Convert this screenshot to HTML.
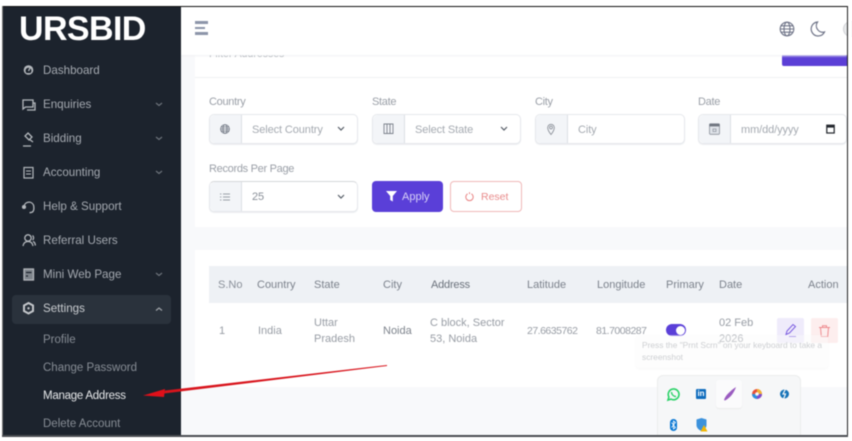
<!DOCTYPE html>
<html><head><meta charset="utf-8"><style>
*{box-sizing:border-box}
html,body{margin:0;padding:0;width:852px;height:441px;overflow:hidden;background:#fff}
body{font-family:"Liberation Sans",sans-serif;position:relative}
#w{position:absolute;inset:0;filter:blur(.4px)}
.a{position:absolute;white-space:nowrap}
.m{color:#a4a9b0;font-size:11.6px;line-height:14px;left:43px}
.s{color:#878d95;font-size:11.5px;line-height:14px;left:43px}
.l{color:#9a9fa7;font-size:11px;line-height:13px;letter-spacing:-.3px}
.g{position:absolute;height:30px;border:1px solid #e6e8ec;border-radius:5px;background:#fff;box-shadow:0 1px 1px #eceef1}
.g i{position:absolute;left:0;top:0;bottom:0;width:32px;background:#f3f5f8;border-right:1px solid #dde0e5;border-radius:5px 0 0 5px}
.t{color:#a5aab1;font-size:11px;line-height:13px;letter-spacing:-.1px}
.h{color:#7c828c;font-size:11px;line-height:13px}
.c{color:#989da5;font-size:11px;line-height:16px}
svg{position:absolute;overflow:visible}
</style></head><body><div id="w">
<div class="a" style="left:181px;top:7px;width:667px;height:428px;background:#f8f9fb"></div>
<div class="a" style="left:195px;top:50px;width:652px;height:177px;background:#fff"></div>
<div class="a" style="left:195px;top:77px;width:652px;height:1px;background:#eff1f3"></div>
<div class="a" style="left:782px;top:46px;width:65px;height:20px;background:#5b3fd6;border-radius:0 0 0 2px;color:#e6e1fa;font-size:10px;line-height:14px;padding-left:19px">Add New</div>
<div class="a" style="left:209px;top:48px;color:#8d939c;font-size:10.5px;line-height:13px">Filter Addresses</div>
<div class="a" style="left:195px;top:250px;width:652px;height:137px;background:#fff"></div>

<div class="a" style="left:181px;top:7px;width:666px;height:48px;background:#fff;box-shadow:0 1px 2px #f0f1f3"></div>
<div class="a" style="left:195px;top:21px;width:13px;height:2.500px;background:#8d95a9"></div>
<div class="a" style="left:195px;top:26.500px;width:10px;height:2px;background:#8d95a9"></div>
<div class="a" style="left:195px;top:32px;width:13px;height:2.500px;background:#8d95a9"></div>
<svg style="left:779px;top:21px" width="16" height="16" viewBox="0 0 16 16" fill="none" stroke="#6f7488" stroke-width="1.100"><circle cx="8" cy="8" r="6.800"/><ellipse cx="8" cy="8" rx="3" ry="6.800"/><path d="M1.200 8h13.600M2 4.800h12M2 11.200h12"/></svg>
<svg style="left:810px;top:21px" width="16" height="16" viewBox="0 0 16 16" fill="none" stroke="#6f7488" stroke-width="1.200"><path d="M7.500 1A7 7 0 1 0 14.500 11 6.500 6.500 0 0 1 7.500 1z"/></svg>
<div class="a" style="left:843px;top:21px;width:16px;height:16px;border-radius:50%;background:#e8e9eb;border:1px solid #d2d4d7"></div>

<div class="a l" style="left:209px;top:96px">Country</div>
<div class="a l" style="left:372px;top:96px">State</div>
<div class="a l" style="left:535px;top:96px">City</div>
<div class="a l" style="left:698px;top:96px">Date</div>
<div class="g" style="left:209px;top:114px;width:149px"><i></i></div>
<div class="g" style="left:372px;top:114px;width:149px"><i></i></div>
<div class="g" style="left:535px;top:114px;width:150px"><i></i></div>
<div class="g" style="left:698px;top:114px;width:149px"><i></i></div>
<div class="a t" style="left:252px;top:124px">Select Country</div>
<div class="a t" style="left:415px;top:124px">Select State</div>
<div class="a t" style="left:578px;top:124px">City</div>
<div class="a t" style="left:741px;top:124px">mm/dd/yyyy</div>
<svg style="left:337px;top:126px" width="8" height="6" fill="none" stroke="#555c66" stroke-width="1.200"><path d="M1 1l3 3 3-3"/></svg>
<svg style="left:500px;top:126px" width="8" height="6" fill="none" stroke="#555c66" stroke-width="1.200"><path d="M1 1l3 3 3-3"/></svg>
<svg style="left:220px;top:124px" width="10" height="10" viewBox="0 0 10 10" fill="none" stroke="#6d7480" stroke-width=".8"><circle cx="5" cy="5" r="4.400"/><ellipse cx="5" cy="5" rx="2" ry="4.400"/><path d="M.6 5h8.800M1 3h8M1 7h8"/></svg>
<svg style="left:383px;top:123px" width="11" height="12" viewBox="0 0 11 12" fill="none" stroke="#7c828c" stroke-width=".9"><path d="M1 1h9v9.500H1zM4 1v9.500M7 1v9.500"/></svg>
<svg style="left:547px;top:123px" width="8" height="12" viewBox="0 0 8 12" fill="none" stroke="#8b9099" stroke-width=".9"><path d="M4 11.500C2 9 .7 7 .7 4.600a3.300 3.300 0 0 1 6.600 0C7.300 7 6 9 4 11.500z"/><circle cx="4" cy="4.500" r="1.400"/></svg>
<svg style="left:709px;top:123px" width="11" height="12" viewBox="0 0 11 12"><rect x=".5" y=".8" width="10" height="10.500" rx="1" fill="#dfe3e9" stroke="#8b919b" stroke-width=".8"/><rect x=".5" y=".8" width="10" height="2.600" fill="#6f7680"/><rect x="4" y="6" width="3" height="2.500" fill="none" stroke="#8b919b" stroke-width=".7"/></svg>
<svg style="left:826px;top:124px" width="9" height="10" viewBox="0 0 9 10" fill="none" stroke="#20242a" stroke-width="1.200"><rect x=".8" y="1.200" width="7.400" height="7.800"/><path d="M.8 2.600h7.400" stroke-width="2"/></svg>

<div class="a l" style="left:209px;top:163px">Records Per Page</div>
<div class="g" style="left:209px;top:181px;width:149px;height:31px;border-top-color:#d5d7da"><i></i></div>
<svg style="left:220px;top:193px" width="10" height="8" fill="none" stroke="#9aa0a8" stroke-width=".9"><path d="M3 1h7M3 4h7M3 7h7M0 1h1.400M0 4h1.400M0 7h1.400"/></svg>
<svg style="left:337px;top:194px" width="8" height="6" fill="none" stroke="#555c66" stroke-width="1.200"><path d="M1 1l3 3 3-3"/></svg>
<div class="a t" style="left:252px;top:191px;color:#8a9099">25</div>
<div class="a" style="left:372px;top:181px;width:71px;height:31px;background:#5a3fd8;border-radius:4px"></div>
<svg style="left:386px;top:191px" width="11" height="11" viewBox="0 0 11 11"><path d="M0 0h11L6.800 5v5.500L4.200 9V5z" fill="#fff"/></svg>
<div class="a" style="left:402px;top:191px;color:#d9d2f7;font-size:11px;line-height:13px">Apply</div>
<div class="a" style="left:450px;top:181px;width:72px;height:31px;border:1px solid #f0b8b8;border-radius:4px;background:#fff"></div>
<svg style="left:465px;top:192px" width="9" height="10" viewBox="0 0 9 10" fill="none" stroke="#e98080" stroke-width="1"><path d="M2.600 1.800a3.700 3.700 0 1 0 3.800 0M4.500.2v1.800"/></svg>
<div class="a" style="left:481px;top:191px;color:#e88a8a;font-size:10.500px;line-height:13px">Reset</div>

<div class="a" style="left:209px;top:266px;width:638px;height:37px;background:#eef1f5"></div>
<div class="a h" style="left:218px;top:279px;color:#8a9099">S.No</div>
<div class="a h" style="left:257px;top:279px">Country</div>
<div class="a h" style="left:314px;top:279px">State</div>
<div class="a h" style="left:383px;top:279px">City</div>
<div class="a h" style="left:431px;top:279px;color:#6b727c;letter-spacing:-.2px">Address</div>
<div class="a h" style="left:527px;top:279px">Latitude</div>
<div class="a h" style="left:597px;top:279px">Longitude</div>
<div class="a h" style="left:666px;top:279px">Primary</div>
<div class="a h" style="left:719px;top:279px">Date</div>
<div class="a h" style="left:808px;top:279px">Action</div>
<div class="a c" style="left:219px;top:323px">1</div>
<div class="a c" style="left:258px;top:323px">India</div>
<div class="a c" style="left:314px;top:315px">Uttar<br>Pradesh</div>
<div class="a c" style="left:383px;top:323px;color:#7d838c">Noida</div>
<div class="a c" style="left:430px;top:315px">C block, Sector<br>53, Noida</div>
<div class="a c" style="left:527px;top:323px;font-size:10.500px;letter-spacing:-.5px">27.6635762</div>
<div class="a c" style="left:596px;top:323px;font-size:10.500px;letter-spacing:-.5px">81.7008287</div>
<div class="a" style="left:666px;top:324px;width:20px;height:12px;border-radius:6px;background:#5a3fd8"></div>
<div class="a" style="left:676px;top:325.500px;width:9px;height:9px;border-radius:50%;background:#fff"></div>
<div class="a c" style="left:719px;top:315px">02 Feb<br>2026</div>
<div class="a" style="left:777px;top:318px;width:27px;height:25px;background:#efebfb;border-radius:2px"></div>
<svg style="left:785px;top:323px" width="12" height="15" viewBox="0 0 12 15" fill="none" stroke="#7a5be0" stroke-width="1"><path d="M1 11.500L2 8 8 1.500l2.500 2L4.500 10zM4 13.500h7"/></svg>
<div class="a" style="left:811px;top:318px;width:27px;height:25px;background:#fdeeee;border-radius:2px"></div>
<svg style="left:819px;top:325px" width="11" height="12" viewBox="0 0 11 12" fill="none" stroke="#ee8b8f" stroke-width="1"><path d="M0 2.500h11M3.500 2.500V.7h4v1.800M1.500 2.500l.8 9h6.400l.8-9"/></svg>

<div class="a" style="left:636px;top:335px;width:192px;height:33px;background:rgba(250,250,251,.45);border-radius:3px;box-shadow:0 1px 3px rgba(0,0,0,.03)"></div>
<div class="a" style="left:642px;top:340px;color:#cdcfd2;font-size:8.400px;line-height:11.500px">Press the "Prnt Scrn" on your keyboard to take a<br>screenshot</div>

<div class="a" style="left:657px;top:375px;width:144px;height:60px;background:#f6f7f8;border:1px solid #eceded;border-bottom:0;border-radius:6px 6px 0 0"></div>
<div class="a" style="left:716px;top:380px;width:26px;height:28px;background:#fbfbfc;border-radius:3px;box-shadow:0 1px 1px #ebebeb"></div>
<svg style="left:667px;top:388px" width="13" height="13" viewBox="0 0 13 13" fill="none" stroke="#2bd268" stroke-width="1.600"><path d="M1 12l.9-3A5.400 5.400 0 1 1 4 11.100z"/><path d="M4.500 4c0 2.500 2 4.500 4.500 4.500" stroke-width="1.400"/></svg>
<div class="a" style="left:696px;top:389px;width:10px;height:10px;background:#0f6cbd;border-radius:1px;color:#fff;font-size:8px;font-weight:bold;line-height:10px;text-align:center">in</div>
<svg style="left:724px;top:387px" width="12" height="14" viewBox="0 0 12 14"><path d="M0 13C1 9 6 4 12 0 10 6 6 11 1 13.500z" fill="#9a5bc0"/></svg>
<svg style="left:752px;top:389px" width="10" height="10" viewBox="0 0 10 10"><circle cx="5" cy="5" r="5" fill="#e8503a"/><path d="M5 0a5 5 0 0 1 5 5H5z" fill="#f2b233"/><path d="M5 5h5a5 5 0 0 1-5 5z" fill="#7b4bd0"/><path d="M5 5v5a5 5 0 0 1-5-5z" fill="#2b8fe0"/><circle cx="5" cy="5" r="1.800" fill="#f6f7f8"/></svg>
<svg style="left:780px;top:389px" width="9" height="10" viewBox="0 0 9 10"><circle cx="4.500" cy="5" r="4.500" fill="#1673b8"/><path d="M5.500 0L3 5h2.500L3.500 10" fill="none" stroke="#f6f7f8" stroke-width="1.200"/></svg>
<svg style="left:670px;top:419px" width="7" height="12" viewBox="0 0 7 12"><rect width="7" height="12" rx="3.400" fill="#0a78d4"/><path d="M1.500 3.500l4 5L3.500 10V2l2 1.500-4 5" fill="none" stroke="#fff" stroke-width=".8"/></svg>
<svg style="left:696px;top:418px" width="12" height="14" viewBox="0 0 12 14"><path d="M.5 1.500L5.500 0l5 1.500V7c0 3-2.500 5-5 6-2.500-1-5-3-5-6z" fill="#3c92dc"/><path d="M8 7l3.500 6.500h-7z" fill="#f2b705"/></svg>

<div class="a" style="left:3px;top:7px;width:178px;height:428px;background:#1c232d"></div>
<div class="a" style="left:19px;top:9px;color:#fff;font-size:34px;font-weight:bold;line-height:40px;letter-spacing:-.6px">URSBID</div>
<div class="a" style="left:12px;top:295px;width:159px;height:29px;background:#2a323c;border-radius:4px"></div>
<div class="a m" style="top:64px">Dashboard</div>
<div class="a m" style="top:98px">Enquiries</div>
<div class="a m" style="top:132px">Bidding</div>
<div class="a m" style="top:166px">Accounting</div>
<div class="a m" style="top:200px">Help &amp; Support</div>
<div class="a m" style="top:234px">Referral Users</div>
<div class="a m" style="top:268px">Mini Web Page</div>
<div class="a m" style="top:302px;color:#c9ccd0">Settings</div>
<div class="a s" style="top:333px">Profile</div>
<div class="a s" style="top:361px">Change Password</div>
<div class="a s" style="top:389px;color:#e6e8ea;letter-spacing:-.25px">Manage Address</div>
<div class="a s" style="top:417px">Delete Account</div>
<svg style="left:0;top:0" width="182" height="330" fill="none" stroke="#b4b8bd" stroke-width="1.300">
<circle cx="28.500" cy="70" r="4.800" fill="#b4b8bd" stroke="none"/><path d="M26.500 73a3 3 0 1 1 4 0z" fill="#1c232d" stroke="none"/><path d="M28.500 71l1.500-3" stroke="#b4b8bd"/>
<path d="M23 100h10v7H25.500L23 109zM33 103h2v7h-8"/>
<path d="M28 133l4 4-3 3-4-4zM29 139l4 3M23 146h8"/>
<rect x="24" y="167.500" width="9" height="10.500" stroke-width="1.200"/><path d="M26 171h5M26 174h5" stroke-width=".9"/>
<path d="M24 207a5 5 0 0 1 9.500-2c.6 2.500.5 5-.5 6.500-1 1-2 1.200-3.500 1.200"/><circle cx="24" cy="207" r="1.400" fill="#b4b8bd"/>
<circle cx="28" cy="238" r="3.200"/><path d="M23 246c.5-3 2.500-4.500 5-4.500s4.500 1.500 5 4.500M32.500 235.500c1.500 1 1.500 3.500 0 4.500M33 241.500c1.500.5 2.200 2 2.400 4"/>
<rect x="24" y="269" width="9.500" height="11" fill="#7e848b"/><path d="M26 272.500h5.500M26 276h2" stroke="#1c232d"/>
<path d="M28.500 303l4.500 2.500v5.500l-4.500 2.500-4.500-2.500v-5.500z" stroke-width="2" stroke="#c4c7cb"/><circle cx="28.500" cy="308.300" r="1.200" fill="#c4c7cb" stroke="none"/>
<g stroke="#6d737b" stroke-width="1.200"><path d="M156 103l3 2.500 3-2.500M156 137l3 2.500 3-2.500M156 171l3 2.500 3-2.500M156 273l3 2.500 3-2.500"/><path d="M156 310.500l3-2.500 3 2.500" stroke="#a0a4aa"/></g>
</svg>

<svg style="left:0;top:0" width="852" height="441"><path d="M387 365L165 390.500l-1 3 223-27.500z" fill="#d8141c"/><path d="M143 395.500l22-6.500-1 8z" fill="#e0101a"/></svg>

<div class="a" style="left:0;top:0;width:852px;height:6px;background:#fff"></div>
<div class="a" style="left:3px;top:6px;width:845px;height:1px;background:#111"></div>
<div class="a" style="left:2px;top:6px;width:1px;height:430px;background:#777"></div>
<div class="a" style="left:847px;top:6px;width:1px;height:430px;background:#222"></div>
<div class="a" style="left:848px;top:0;width:4px;height:441px;background:#fff"></div>
<div class="a" style="left:2px;top:435px;width:846px;height:2px;background:#4a4d52"></div>
<div class="a" style="left:0;top:437px;width:852px;height:4px;background:#fff"></div>
</div></body></html>
